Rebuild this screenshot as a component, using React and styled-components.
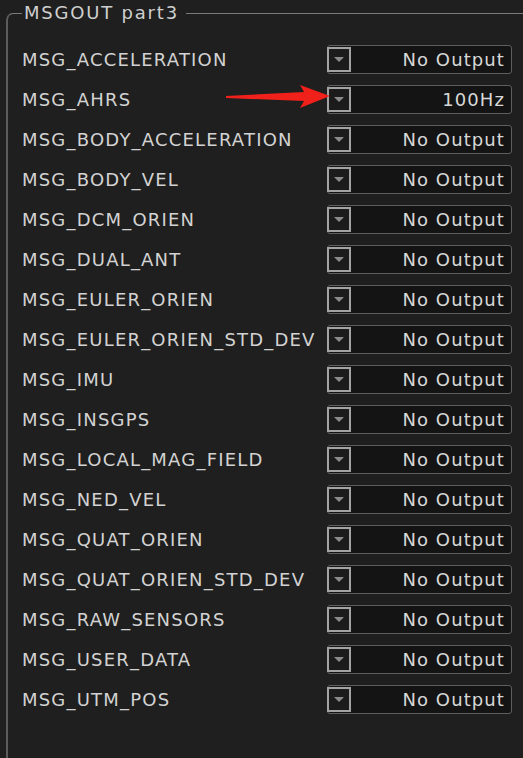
import React from 'react';
import styled, { createGlobalStyle } from 'styled-components';

const GlobalStyle = createGlobalStyle`
	html, body {
		margin: 0;
		padding: 0;
		background: #1f1f1f;
		overflow: hidden;
	}
	body {
		font-family: 'DejaVu Sans', Verdana, sans-serif;
	}
`

const Page = styled.div`
	position: relative;
	width: 523px;
	height: 758px;
	background: #1f1f1f;
	overflow: hidden;
`

const Group = styled.fieldset`
	margin: 2px -20px 0 6px;
	padding: 15px 31px 0 14px;
	min-height: 800px;
	border: none;
	border-top: 1px solid #7a7a7a;
	border-left: 2px solid #5c5c5c;
	border-top-left-radius: 7px;
	box-sizing: border-box;
`

const Title = styled.legend`
	margin-left: 0;
	padding: 0 7px 0 2px;
	font-size: 18px;
	letter-spacing: 1.8px;
	color: #cfcfcf;
	line-height: 22px;
`

const Rows = styled.div`
	display: flex;
	flex-direction: column;
`

const Row = styled.div`
	display: flex;
	align-items: center;
	justify-content: space-between;
	height: 40px;
`

const Label = styled.span`
	font-size: 18px;
	letter-spacing: 1.2px;
	color: #d3d3d3;
	white-space: nowrap;
`

const Combo = styled.div`
	display: flex;
	align-items: stretch;
	width: 185px;
	height: 29px;
	box-sizing: border-box;
	border: 1px solid #5e5e5e;
	border-radius: 3px;
	background: #141414;
	padding: 1px 0 1px 0;
`

const DropButton = styled.div`
	width: 24px;
	box-sizing: border-box;
	border: 2px solid #a3a3a3;
	background: #1b1b1b;
	display: flex;
	justify-content: center;
	padding-top: 8px;
	margin-left: -1px;
`

const Triangle = styled.div`
	width: 0;
	height: 0;
	border-left: 5px solid transparent;
	border-right: 5px solid transparent;
	border-top: 5px solid #8a8a8a;
`

const Value = styled.span`
	flex: 1;
	text-align: right;
	padding-right: 6px;
	font-size: 18px;
	letter-spacing: 1.1px;
	color: #d8d8d8;
	line-height: 25px;
`

const Arrow = styled.svg`
	position: absolute;
	left: 226px;
	top: 84px;
`

const messages = [
	['MSG_ACCELERATION', 'No Output'],
	['MSG_AHRS', '100Hz'],
	['MSG_BODY_ACCELERATION', 'No Output'],
	['MSG_BODY_VEL', 'No Output'],
	['MSG_DCM_ORIEN', 'No Output'],
	['MSG_DUAL_ANT', 'No Output'],
	['MSG_EULER_ORIEN', 'No Output'],
	['MSG_EULER_ORIEN_STD_DEV', 'No Output'],
	['MSG_IMU', 'No Output'],
	['MSG_INSGPS', 'No Output'],
	['MSG_LOCAL_MAG_FIELD', 'No Output'],
	['MSG_NED_VEL', 'No Output'],
	['MSG_QUAT_ORIEN', 'No Output'],
	['MSG_QUAT_ORIEN_STD_DEV', 'No Output'],
	['MSG_RAW_SENSORS', 'No Output'],
	['MSG_USER_DATA', 'No Output'],
	['MSG_UTM_POS', 'No Output'],
]

const App = () => {
	return (
		<Page>
			<GlobalStyle />
			<Group>
				<Title>MSGOUT part3</Title>
				<Rows>
					{messages.map(([name, rate]) => (
						<Row key={name}>
							<Label>{name}</Label>
							<Combo>
								<DropButton><Triangle /></DropButton>
								<Value>{rate}</Value>
							</Combo>
						</Row>
					))}
				</Rows>
			</Group>
			<Arrow width="106" height="26" viewBox="0 0 106 26">
				<polygon points="0,12 78,8 74,1 104,12 74,24 78,17 0,14" fill="#f0201a" />
			</Arrow>
		</Page>
	)
}

export default App;
